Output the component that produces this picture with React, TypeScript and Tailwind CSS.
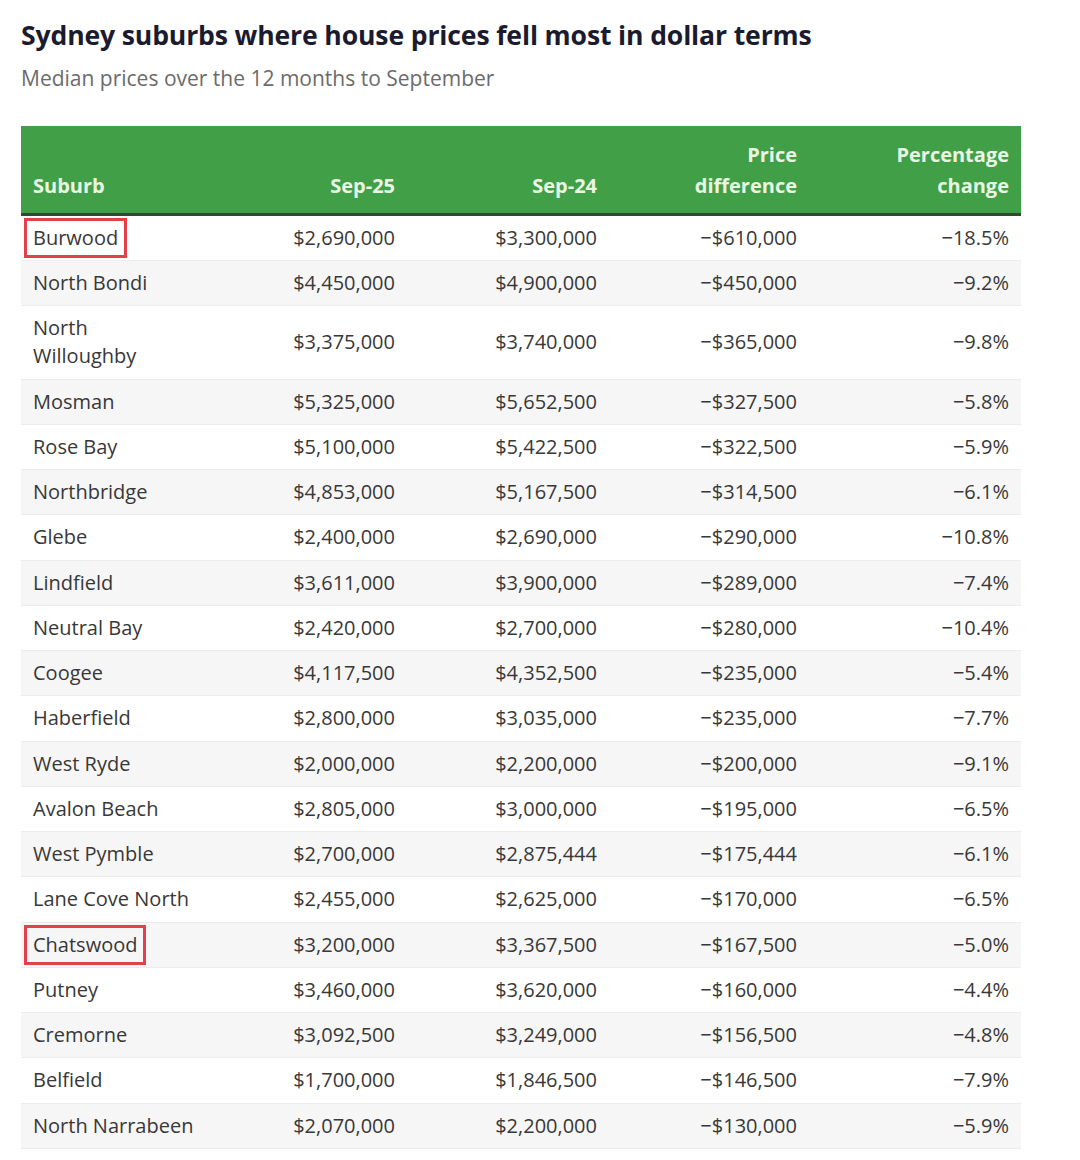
const rows: [string, string, string, string, string][] = [
  ['Burwood', '$2,690,000', '$3,300,000', '−$610,000', '−18.5%'],
  ['North Bondi', '$4,450,000', '$4,900,000', '−$450,000', '−9.2%'],
  ['North Willoughby', '$3,375,000', '$3,740,000', '−$365,000', '−9.8%'],
  ['Mosman', '$5,325,000', '$5,652,500', '−$327,500', '−5.8%'],
  ['Rose Bay', '$5,100,000', '$5,422,500', '−$322,500', '−5.9%'],
  ['Northbridge', '$4,853,000', '$5,167,500', '−$314,500', '−6.1%'],
  ['Glebe', '$2,400,000', '$2,690,000', '−$290,000', '−10.8%'],
  ['Lindfield', '$3,611,000', '$3,900,000', '−$289,000', '−7.4%'],
  ['Neutral Bay', '$2,420,000', '$2,700,000', '−$280,000', '−10.4%'],
  ['Coogee', '$4,117,500', '$4,352,500', '−$235,000', '−5.4%'],
  ['Haberfield', '$2,800,000', '$3,035,000', '−$235,000', '−7.7%'],
  ['West Ryde', '$2,000,000', '$2,200,000', '−$200,000', '−9.1%'],
  ['Avalon Beach', '$2,805,000', '$3,000,000', '−$195,000', '−6.5%'],
  ['West Pymble', '$2,700,000', '$2,875,444', '−$175,444', '−6.1%'],
  ['Lane Cove North', '$2,455,000', '$2,625,000', '−$170,000', '−6.5%'],
  ['Chatswood', '$3,200,000', '$3,367,500', '−$167,500', '−5.0%'],
  ['Putney', '$3,460,000', '$3,620,000', '−$160,000', '−4.4%'],
  ['Cremorne', '$3,092,500', '$3,249,000', '−$156,500', '−4.8%'],
  ['Belfield', '$1,700,000', '$1,846,500', '−$146,500', '−7.9%'],
  ['North Narrabeen', '$2,070,000', '$2,200,000', '−$130,000', '−5.9%'],
];

const marked = ['Burwood', 'Chatswood'];

export default function App() {
  return (
    <div className="w-[1080px] h-[1160px] bg-white pl-[21px] pt-[17px] font-['Open_Sans',sans-serif] text-[#383838]">
      <h1 className="text-[26.6px] leading-[36px] font-bold text-[#1b1b2f] tracking-[-0.15px]">
        Sydney suburbs where house prices fell most in dollar terms
      </h1>
      <p className="mt-[11px] text-[21px] leading-[28px] text-[#6b6b6b]">
        Median prices over the 12 months to September
      </p>

      <table className="mt-[34px] w-[1000px] table-fixed border-collapse text-[20px]">
        <colgroup>
          <col className="w-[188px]" />
          <col className="w-[198px]" />
          <col className="w-[202px]" />
          <col className="w-[200px]" />
          <col className="w-[212px]" />
        </colgroup>
        <thead>
          <tr className="h-[88px] bg-[#41a047] border-b-[3px] border-[#2f4b31] text-[#eaf6e4] font-bold leading-[31px] align-bottom">
            <th className="px-3 pb-[12px] text-left">Suburb</th>
            <th className="px-3 pb-[12px] text-right">Sep-25</th>
            <th className="px-3 pb-[12px] text-right">Sep-24</th>
            <th className="px-3 pb-[12px] text-right">Price<br />difference</th>
            <th className="px-3 pb-[12px] text-right">Percentage<br />change</th>
          </tr>
        </thead>
        <tbody>
          {rows.map((r, i) => (
            <tr
              key={r[0]}
              className={(i % 2 === 1 ? 'bg-[#f6f6f6]' : 'bg-white') + ' border-b border-[#ececec] leading-[28.25px]'}
            >
              <td className="px-3 py-[8px] text-left">
                {marked.includes(r[0]) ? (
                  <span className="-mx-[9px] -my-[6px] inline-block border-[3px] border-[#e2404a] px-[6px] py-[3px]">{r[0]}</span>
                ) : r[0] === 'North Willoughby' ? (
                  <>North<br />Willoughby</>
                ) : (
                  r[0]
                )}
              </td>
              <td className="px-3 py-[8px] text-right">{r[1]}</td>
              <td className="px-3 py-[8px] text-right">{r[2]}</td>
              <td className="px-3 py-[8px] text-right">{r[3]}</td>
              <td className="px-3 py-[8px] text-right">{r[4]}</td>
            </tr>
          ))}
        </tbody>
      </table>
    </div>
  );
}
